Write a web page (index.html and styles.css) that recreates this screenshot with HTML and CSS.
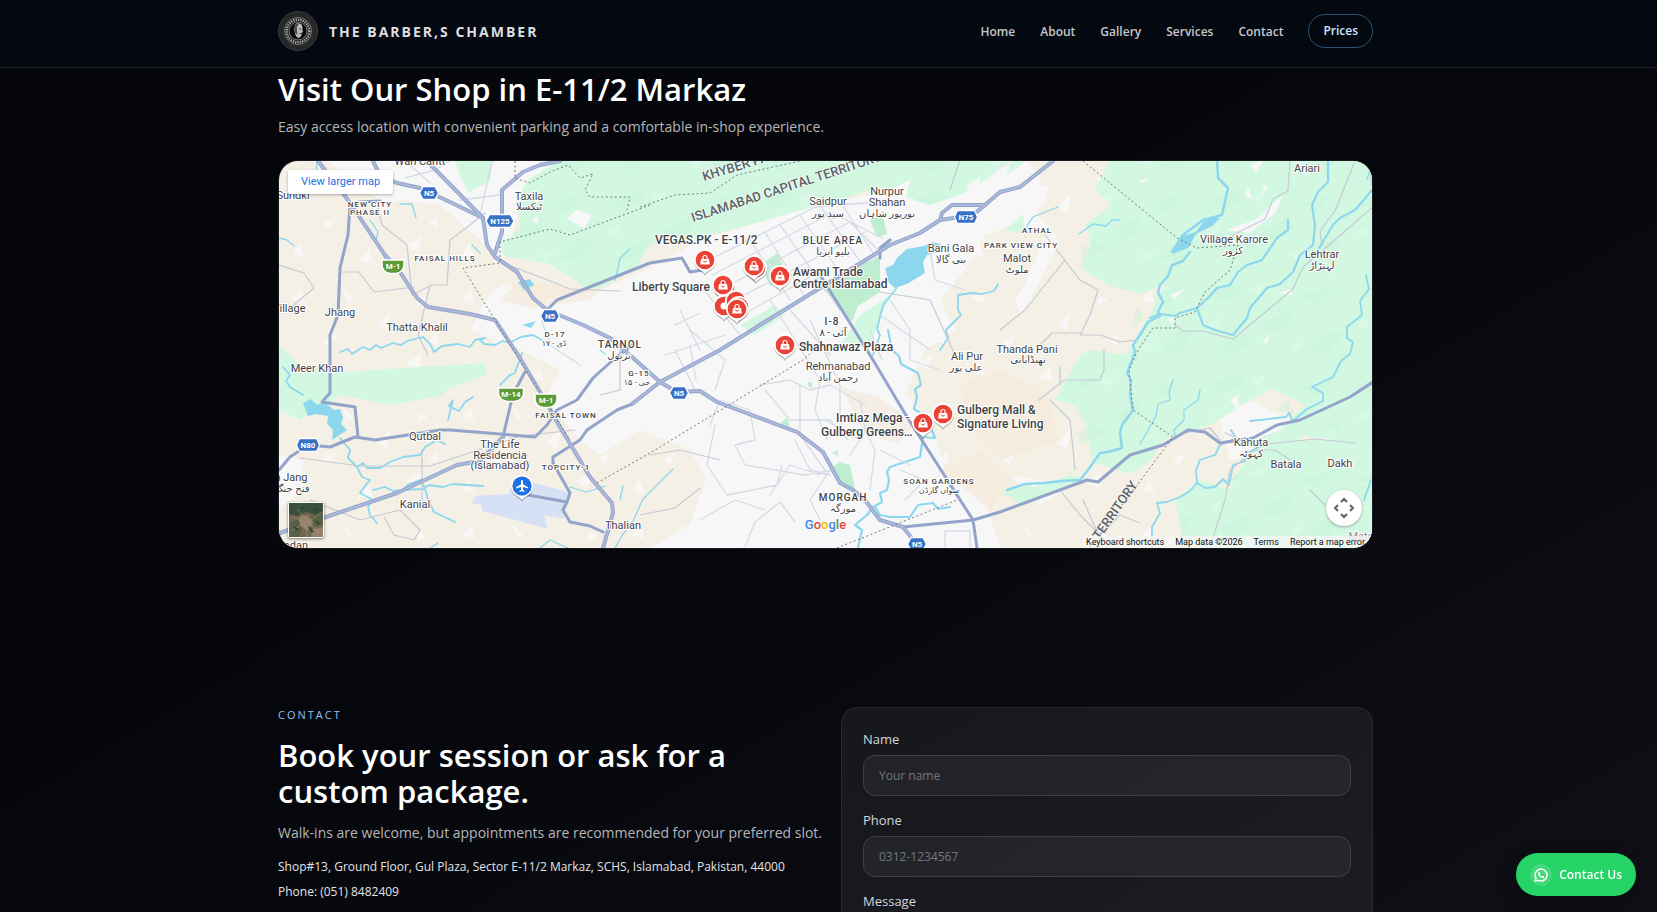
FILE: index.html
```html
<!DOCTYPE html>
<html lang="en">
<head>
<meta charset="utf-8">
<meta name="viewport" content="width=device-width, initial-scale=1">
<title>The Barber,s Chamber</title>
<link rel="stylesheet" href="styles.css">
</head>
<body>
<header class="site-header">
  <div class="container header-row">
    <a class="brand" href="#top">
      <svg class="brand-logo" viewBox="0 0 40 40" aria-hidden="true">
        <defs><radialGradient id="lg"><stop offset="0" stop-color="#191919"/><stop offset=".7" stop-color="#2b2a2a"/><stop offset="1" stop-color="#242427"/></radialGradient></defs>
        <circle cx="20" cy="20" r="19.500" fill="url(#lg)" stroke="#3b3d42"/>
        <circle cx="20" cy="20" r="13.500" fill="#111" stroke="#8a8a8a" stroke-width=".8"/>
        <circle cx="20" cy="20" r="11.300" fill="none" stroke="#a0a0a0" stroke-width="2.600" stroke-dasharray="1.500 .9"/>
        <circle cx="20" cy="20" r="9" fill="#0c0c0c" stroke="#aaa" stroke-width=".7"/>
        <path d="M17 13.500c2-2 6-1.500 7 1 .7 1.800.2 3 .4 4.500l.6 2-1.200.6c0 2.600-.8 4.800-3.300 5.400-2.500-1-3.500-3.500-3.700-6l-.8-3z" fill="#bdbdbd"/>
        <path d="M16 14c2-2 4-1.500 5-.5-2 1-2.500 3-2 5.500l.5 5c-2-1-3-3-3-5z" fill="#4a4a4a"/>
        <path d="M21 18h2M21.500 22.500h2" stroke="#222" stroke-width=".9"/>
      </svg>
      <span class="brand-name">THE BARBER,S CHAMBER</span>
    </a>
    <nav class="nav" aria-label="Main">
      <a href="#home">Home</a>
      <a href="#about">About</a>
      <a href="#gallery">Gallery</a>
      <a href="#services">Services</a>
      <a href="#contact">Contact</a>
      <a class="nav-pill" href="#prices">Prices</a>
    </nav>
  </div>
</header>

<main>
  <section class="container visit">
    <h2 class="title">Visit Our Shop in E-11/2 Markaz</h2>
    <p class="lead">Easy access location with convenient parking and a comfortable in-shop experience.</p>
    <div class="map">
      <svg class="map-canvas" viewBox="0 0 1093 387" preserveAspectRatio="xMidYMid slice" role="img" aria-label="Map of Islamabad">
        <defs>
          <g id="pin"><path d="M0 15c-2-3.500-5-4-7.800-7A11 11 0 1 1 7.800 8C5 11 2 11.500 0 15z" fill="#000" opacity=".25" transform="translate(0 1)"/><path d="M0 14c-2-3-5-3.500-7.800-6.200A11 11 0 1 1 7.800 7.800C5 10.500 2 11 0 14z" fill="#fff"/><circle r="9.300" fill="#ea4335"/></g>
          <g id="shop"><use href="#pin"/><path d="M-4-1h8l.8 5.500h-9.600z" fill="#fff"/><path d="M-2-1v-1.500a2 2 0 0 1 4 0V-1" fill="none" stroke="#fff" stroke-width="1.200"/><path d="M-1.800 1c.8 1.600 2.800 1.600 3.600 0" fill="none" stroke="#ea4335" stroke-width="1"/></g>
          <path id="nsh" d="M-6-6.500H6L9.500 0 6 6.500H-6L-9.500 0z"/>
          <path id="nshw" d="M-10.500-6.500h21L14 0l-3.500 6.500h-21L-14 0z"/>
          <path id="msh" d="M-11-7h22v5c0 5-4 8-8 8.500h-6c-4-.5-8-3.500-8-8.500z"/>
          <pattern id="hill" width="150" height="92" patternUnits="userSpaceOnUse">
            <path d="M5 20l30-14 12 6-20 12zM60 50l28-18 6 12-20 14zM100 20l34-10-18 20zM20 70l24-14 14 6-28 18zM110 74l20-20 14 4-16 20z" fill="#c6efd6" opacity=".4"/>
            <path d="M50 14l16-8-6 12zM90 70l16-4-10 10zM6 50l14-8-4 10z" fill="#e0faea" opacity=".7"/>
          </pattern>
          <pattern id="plain" width="170" height="118" patternUnits="userSpaceOnUse">
            <path d="M12 20l10-9 4 13zM62 8l12 12-5 3zM44 62l14-7-8 13zM98 46l14-14-4 20zM140 16l9 5-11 6zM126 84l17-9-4 16zM14 94l6-12 6 14zM80 100l10-12 5 14zM150 62l9-8-1 13z" fill="#f8f7f6"/>
          </pattern>
        </defs>
        <rect width="1093" height="387" fill="#f5f0e5"/>
        <rect width="1093" height="387" fill="url(#plain)"/>
        <g transform="translate(-279 -161)" stroke-linejoin="round" stroke-linecap="round">
          <g fill="#f7f7f8">
            <path d="M327 161H560L545 175 520 190 515 230 500 262 480 240 440 205 400 200 385 205 360 185z"/>
            <path d="M470 330L492 290 505 284 540 300 600 290 650 268 700 240 760 222 820 205 870 195 925 190 1025 161 1040 175 1038 215 1060 240 1015 225 985 235 965 270 940 300 955 330 925 350 905 395 930 420 945 470 985 500 1000 548 650 548 690 525 706 480 690 450 640 430 600 455 585 445 545 400 560 370 520 350z"/>
            <path d="M1005 190l45-5-8 22-40 8zM1015 300l10-15 20-50 14 6-24 50-15 25zM1220 420l30-20 40 20-20 30-40 10zM279 455l25 5-5 30-20 20zM1010 475l60 10-30 20z"/>
          </g>
          <g fill="#f5ead9"><path d="M840 386l40 12 35 26-18 20-32-10zM960 384l40-14 45 20 15 50-60 20-28-26zM500 300l20-20 60 10 30-10-20 20-60 8zM940 470l40-20 30 30-20 30z" opacity=".65"/></g>
          <g fill="#d3f8e2">
            <path d="M455 161h38l-3 20-22 12-8-18zM560 161H1010L985 180 960 195 930 205 900 195 870 190 840 200 800 210 760 222 700 238 650 244 636 268 600 288 585 289 575 280 550 264 503 256 500 242 520 232 518 195 530 178z"/>
            <path d="M1110 161L1095 190 1112 205 1085 225 1092 245 1080 268 1110 286 1140 294 1165 284 1150 315 1125 355 1090 350 1080 355 1055 400 1075 406 1088 430 1092 462 1130 474 1152 460 1163 440 1210 425 1250 400 1272 389 1305 405 1280 430 1240 445 1290 455 1300 436 1372 444V161z"/>
            <path d="M1260 445L1235 475 1230 490 1200 480 1175 500 1185 548H1372V440L1310 440z"/>
            <path d="M279 345L300 365 350 372 400 368 485 363 487 375 450 388 440 396 390 405 340 395 300 420 279 410z"/>
            <path d="M1010 495l60-20 20 5-70 25zM1000 495l30-12 10 18zM1005 230l18-16 2 20zM840 345l20-30 30-20-20 50zM740 325l35-20 10 10-30 20zM1012 161h14l-20 15z"/>
          </g>
          <path d="M560 161H1010L985 180 930 205 870 190 800 210 700 238 650 244 600 288 503 256 520 190zM1110 161L1095 190 1085 225 1080 268 1140 294 1125 355 1055 400 1092 462 1250 400 1372 444V161zM1235 475L1175 500 1185 548H1372V445z" fill="url(#hill)"/>
          <g fill="#f7f7f8"><path d="M1138 182l12-6-7 7zM1244 195l5-8 3 12zM1250 165l14-5-8 12zM1262 188l6-5-2 8zM1225 230l30-10 28-25-8 18-25 20zM1170 295l14-6-9 10zM1278 293l14-4v6zM1262 343l8-10-3 10zM567 218l10-8 15 5-8 14zM531 220l8-4-1 8zM880 195l30-15-5 24zM965 188l15-12-1 16zM1230 400l8-6 2 20zM1168 320l6-6v10z"/></g>
          <path d="M823 290L845 270 880 257 880 292 858 306 852 322 835 300zM760 265l18-12 10 25-18 8zM870 220l12-8 5 22-10 3zM832 467l8-5 10 3 5 25-14-6zM779 425l8-8 3 10zM832 453l6-3v6zM808 382l4 0 0 6-4-2z" fill="#bdeed0"/>
          <path d="M475 496l33-2 8-16 52 14-4 27-20-4 4 14-66-18v-6l-10-2z" fill="#d7e1f6"/>
          <!-- water -->
          <g fill="none" stroke="#8dd7ee" stroke-width="1.800">
            <path d="M1217 161L1218 178 1228 188 1222 215 1203 220 1183 235 1172 252M1190 252L1183 261 1172 265 1168 276 1160 285 1158 292 1163 302 1158 312 1160 316 1148 322 1140 335 1133 345 1135 352 1127 373 1131 380 1130 395 1133 410 1122 425 1120 433 1122 448 1108 452 1100 453 1088 470 1080 480 1062 481 1043 483 1025 484 1007 490" stroke-width="2.500"/>
            <path d="M1150 318L1160 314 1175 316 1180 313 1197 308 1203 325 1215 330 1233 335 1247 318 1250 308 1267 288 1280 284 1293 272 1300 255 1313 245 1315 225 1312 205 1318 192 1328 182V161M1372 190L1362 202 1355 210 1340 218 1333 225 1318 250M1197 308L1208 298 1217 288 1230 285 1238 272 1247 265 1262 260 1277 238 1288 230V220" stroke-width="2.200"/>
            <path d="M1366 275l3 14-9 12 2 14-15 12 0 11 6 4-3 12-9 7-8 16-21 10 11 6 0 8-16 8-14 12-4-8-3 4-36 4M1231 430l5 8-16 7-5 10-15 5-4 10 1 13-7 8-10 6-13 5-10 1 3 10-8 14V548M1197 483l8 5 10-1 8-8 6 6 4-20 12-4 2-8 16-8M1371 480l-7 20"/>
            <path d="M858 548l4-18-7-5 12-10 6-8 9-5-2-9 7-3 2-10-2-8 3-5 30-10 3-20 12 1-4-10-2-10-15-9 3-12-2-8 6-4-3-12-17-9-2-8-7-6-4-20M875 507l5 8 10 2 20 0 8-12 15-2 5 6 12-2" stroke-width="2.200"/>
            <path d="M873 355l7-20-3-6 6-24 13-16 3-10 5-5M940 350l8-12-2-8 15-15-3-5 0-15 14-2 10 1 12-3 4-7"/>
            <path d="M340 352l8-3 4 5 11-7 7 3 6-5 5 3 12-5 8 2 6-4 16-4 7 7 4 8 8-6 16-2 12 3 5-7 10-2-5 2 4 4 11 1 8-4 6 2 12-6 12-2 7 4 8 4M283 367l7 8-4 6 4 6 13 8M340 438l10 12-2 8 9 9 6-4 4 5 13 0 10-6 13-5 17-2 5-8 12-7 8 4M357 467l5 10 8 3-5 6-5 7 13 7-5 7 2 8 7 8M373 490l12-3 8 4 10-1 6-6 11-4 5 8 3 12 6 12 21 10M403 490l20-1 6-4 14 2 10-3 30 2M448 420l3-12 2-8-4 6 10 5 6-9 8-5M500 385l10-10 5-2 7-20"/>
            <path d="M317 161l-1 18M279 238l8 2 7 6M370 220l8 12-2 8 12 25M400 204l12 0 4 14M472 245l8 8M615 280l3-12 2-10 10-9M600 350l5 4M570 487l16 5 20-6M615 548l8-14 10-13 10-22 30-30M620 500l3-14M1120 220l-8 0-6 6-13-2-14 10M1173 380l-4 12 1 8-12 4-2 12-10 18-6 10M1200 390l-2 10-14 10 0 10-10 10 1 6M1372 165l-5 14M1058 207l-25 10-10 15M430 548l8-5M540 548l10-8 18 8" stroke-width="1.300"/>
          </g>
          <g fill="#8dd7ee"><path d="M885 268l4 15 6 5 12-4 18-11-2-11 4-7 10-3 4-8-9-2-8 4-17 3-10 9-4 7zM303 403l8-4 6 6 7-3 10 8 6-1 3 9-2 6 6 6-9 6-6 4 1-10-6-6 1-8-12-2-8 2zM1172 254l4-8 6-10 14-4 10-14 14 0-8 8-16 8-8 14zM518 282l12-3 4 6-10 5zM522 325l14-4-5 7z"/></g>
          <!-- local roads -->
          <g fill="none" stroke="#d5dbe6" stroke-width="1.300">
            <path d="M705 262l110-55 60-5M712 275l120-62 50 25M720 290l130-68 30 30M735 300l130-68M742 315l75-42M755 325l70-40M750 240l40 60M765 232l40 65M780 225l60 85M800 215l45 65M820 206l45 62M840 201l38 60M770 300l50 80-5 30 12 30M700 285l40 50M690 330l35 30-10 30M790 310l40 45M810 320l30 65 0 40"/>
            <path d="M665 355l60-20M675 350l20 40M690 345l6 35M760 385l30-5 20 10 20-5 35 20M765 390l25 30 40 0 18 20M710 425l10-25 30 10 5 30-20 5 10 20 60 10 30-5M715 425l-8 40 20 30 50-10 5-20M770 495l20-30 30 10M795 440l15 30 20 5M800 385l0 50 25 35M825 420l35 20-10 15M860 400l5 30 10 20-5 40M700 520l35-20 30 10M745 547l10-25 25-20 15 20M830 470l-20 30 10 20M880 450l30 15M900 470l25 10-20 20M945 531h25v16M945 531v16"/>
            <path d="M405 178l30-8 15-9M410 165l20 18M480 215l12-54M460 200l40-5M540 315l10 30 30 20M890 300l20 30 0 30 30 10M930 250l5 30 30 10M870 330l12 30M880 315l50 35M680 310l20 40M675 325l25-12"/>
          </g>
          <g fill="none" stroke="#c4c9d5" stroke-width="1.200">
            <path d="M377 205l5 20 25 20 5 50 20-10 15 0 3-45 20-15 15-12M341 272l18 0 15 20 40-5M279 265l25 8 10 15-30 25M430 285l-12 50 10 20M500 262l40 15 30 12 50 2M300 458l60 8 70 0 90-30 55-6M422 450l0 60M310 500l50 20 40-10 20 20-6 10-20-5-10-18M640 515l35-7 25-20M600 395l20-5 0-40M650 455l30-5 40 10"/>
            <path d="M880 292l50 8 25 55M960 160l-10 30M1045 235l35 45 18 10-8 25-10 20M1065 260l-40 50-25 20M1080 335l20 0 20 7 18-2M1040 345l12-12 30 0M1104 350v20l-4 10-36 0-25 20M1060 385l0-18M1371 165l0 20M1355 161l-20 50-15 20 2 15M1290 161l-2 30-15 8-8 20-30 15-10 10M1175 325l8 6 20 0 30 8 30-25 30-25 10-22 33-28 40-35M1050 400l20 20 5 50M1355 443l-40-4-60 6-30-12M1220 440l-10-12-25 5M1290 460l-15-10-20 0-25 20-5 30-15 47M1310 490l15 15M1083 500l20 45M1060 490l20 25 20 20 20-20 20 8"/>
          </g>
          <!-- main roads -->
          <g fill="none">
            <g stroke="#93a3ca" stroke-width="4">
              <path id="r1" d="M318 161L348 200 385 255 400 272 417 298 428 307 470 314 495 320 518 355 543 397 560 427 590 477 612 503 613 513 603 548"/>
              <path id="r2" d="M373 161L380 175 397 183 420 188 450 202 483 218 487 245 495 257 517 272 533 298 547 310 583 325 610 338 632 357 660 382 677 392 700 391 717 402 797 432 823 452 840 483 853 490 865 500 880 520 903 527 917 545"/>
              <path id="r3" d="M560 161L540 165 523 172 502 190 502 232 495 253M427 161L483 218"/>
              <path id="r4" d="M280 533L323 518 397 493 457 465 480 461 503 437M632 404L660 382 720 350 820 288 890 245 920 233 940 220 973 215 985 205 1000 192 1020 187 1053 161M940 220L942 213 952 205 985 205"/>
              <path id="r5" d="M820 275L870 355 907 417 973 520 977 548M903 527L973 520 1000 512 1087 480 1098 482 1130 455 1163 445 1188 430 1205 432 1220 443 1253 438 1277 425 1300 420 1350 397 1373 382" stroke-width="3"/>
              <path d="M547 310L557 300 650 263 682 258 690 272 703 270M279 470L290 457 308 445 330 447 355 437 375 440 440 430 450 430 500 434 535 437 547 425 557 410 577 400 593 378 613 360 632 345M525 372L513 394 503 437M528 495L567 502 570 493 553 463 553 457 580 440 587 430 617 410 632 404M567 502L563 510 570 522 590 526 603 532M350 205L348 235 340 268 338 315 330 335 330 393 322 402 355 407 358 437M350 205l10-3 20-1M880 258l0-10 10-8" stroke-width="3"/>
            </g>
            <g stroke="#aab8d9" stroke-width="2.200"><use href="#r1"/><use href="#r2"/><use href="#r3"/><use href="#r4"/></g>
          </g>
          <!-- borders -->
          <g fill="none" stroke="#76777b" stroke-width="1" stroke-dasharray="2 2.500" stroke-linecap="butt">
            <path d="M515 161V178L530 183 550 172 568 165 580 178 593 174 585 190 590 197 630 197 627 210M650 205L570 235 550 229 500 242V263L463 268 495 320 570 440M597 483L650 453 803 360 820 345M640 207L675 195 710 193 737 175 800 161M1083 161L1177 238 1197 248 1238 245 1230 270 1205 292 1195 312 1175 318 1175 328 1153 328 1138 350 1129 370 1133 410 1173 437 1090 548M837 548L957 500"/>
          </g>
          <!-- labels -->
          <g class="lb">
            <text x="420" y="165">Wah Cantt</text><text x="293" y="199">Sundki</text>
            <text x="529" y="200">Taxila</text><text class="ur" x="529" y="210">ٹیکسلا</text>
            <text x="289" y="312">Village</text><text x="340" y="316">Jhang</text><text x="417" y="331">Thatta Khalil</text>
            <text x="317" y="372">Meer Khan</text><text x="425" y="440">Qutbal</text>
            <text x="500" y="448">The Life</text><text x="500" y="459">Residencia</text><text x="500" y="469">(Islamabad)</text>
            <text x="291" y="481">h Jang</text><text class="ur" x="292" y="492">فتح جنگ</text><text x="415" y="508">Kanial</text><text x="623" y="529">Thalian</text><text x="292" y="549">Hadan</text>
            <text x="828" y="205">Saidpur</text><text class="ur" x="828" y="217">سید پور</text>
            <text x="887" y="195">Nurpur</text><text x="887" y="206">Shahan</text><text class="ur" x="887" y="217">نورپور شاہاں</text>
            <text x="951" y="252">Bani Gala</text><text class="ur" x="951" y="263">بنی گالا</text>
            <text x="1017" y="262">Malot</text><text class="ur" x="1017" y="273">ملوٹ</text>
            <text x="967" y="360">Ali Pur</text><text class="ur" x="966" y="371">علی پور</text>
            <text x="1027" y="353">Thanda Pani</text><text class="ur" x="1028" y="363">تھنڈاپانی</text>
            <text x="838" y="370">Rehmanabad</text><text class="ur" x="838" y="381">رحمن آباد</text>
            <text x="1307" y="172">Ariari</text><text x="1234" y="243">Village Karore</text><text class="ur" x="1233" y="254">کرور</text>
            <text x="1322" y="258">Lehtrar</text><text class="ur" x="1322" y="269">لہتڑاڑ</text>
            <text x="1251" y="446">Kahuta</text><text class="ur" x="1251" y="457">کہوٹہ</text><text x="1286" y="468">Batala</text><text x="1340" y="467">Dakh</text><text class="faint" x="1363" y="540">Mator</text>
          </g>
          <g class="lb dist">
            <text x="370" y="207">NEW CITY</text><text x="370" y="215">PHASE II</text><text x="445" y="261">FAISAL HILLS</text><text x="566" y="418">FAISAL TOWN</text>
            <text x="566" y="470">TOPCITY-1</text><text x="1037" y="233">ATHAL</text><text x="1021" y="248">PARK VIEW CITY</text><text x="939" y="484">SOAN GARDENS</text><text class="ur s" x="939" y="493">سواں گارڈن</text>
            <text x="555" y="337">D-17</text><text class="ur s" x="554" y="346">ڈی - ۱۷</text><text x="639" y="376">G-15</text><text class="ur s" x="637" y="385">جی - ۱۵</text>
          </g>
          <g class="lb town">
            <text x="620" y="348">TARNOL</text><text class="ur" x="619" y="359">ترنول</text><text x="833" y="244">BLUE AREA</text><text class="ur" x="833" y="255">بلیو ایریا</text>
            <text x="832" y="325">I-8</text><text class="ur" x="833" y="336">آئی - ۸</text><text x="843" y="501">MORGAH</text><text class="ur" x="843" y="512">مورگہ</text>
          </g>
          <g class="lb area">
            <text transform="translate(693 222) rotate(-18)">ISLAMABAD CAPITAL TERRITORY</text>
            <text transform="translate(704 181) rotate(-17)">KHYBER PAKHTUNKHWA</text>
            <text class="area-end" transform="translate(1138 485) rotate(-55)">TERRITORY</text>
          </g>
          <g class="lb poi">
            <text x="655" y="244">VEGAS.PK - E-11/2</text><text x="632" y="291">Liberty Square</text>
            <text x="793" y="276">Awami Trade</text><text x="793" y="288">Centre Islamabad</text><text x="799" y="351">Shahnawaz Plaza</text>
            <text x="836" y="422">Imtiaz Mega -</text><text x="821" y="436">Gulberg Greens…</text><text x="957" y="414">Gulberg Mall &amp;</text><text x="957" y="428">Signature Living</text>
          </g>
          <g fill="#3871c6" stroke="#fff" stroke-width="1.500">
            <use href="#nsh" x="429" y="193"/><use href="#nshw" x="500" y="221"/><use href="#nsh" x="550" y="316"/><use href="#nshw" transform="translate(966 217) scale(.82 1)"/><use href="#nshw" transform="translate(308 445) scale(.82 1)"/><use href="#nsh" x="679" y="393"/><use href="#nsh" x="917" y="544"/>
          </g>
          <g fill="#5c9a36" stroke="#fff" stroke-width="1.500"><use href="#msh" x="393" y="267"/><use href="#msh" transform="translate(511 395) scale(1.150 1)"/><use href="#msh" x="546" y="401"/></g>
          <g class="sh-t"><text x="429" y="196">N5</text><text x="500" y="224">N125</text><text x="550" y="319">N5</text><text x="966" y="220">N75</text><text x="308" y="448">N80</text><text x="679" y="396">N5</text><text x="917" y="547">N5</text><text x="393" y="269">M-1</text><text x="511" y="397">M-14</text><text x="546" y="403">M-1</text></g>
          <use href="#shop" x="705" y="260"/><use href="#shop" x="756" y="268"/><use href="#shop" x="754" y="266"/><use href="#shop" x="780" y="276"/><use href="#shop" x="725" y="287"/><use href="#shop" x="723" y="285"/>
          <use href="#pin" x="724" y="306"/><circle cx="724" cy="306" r="3.500" fill="#fff"/><use href="#pin" x="736" y="301"/><use href="#pin" x="739" y="307"/><use href="#shop" x="737" y="309"/>
          <use href="#shop" x="785" y="345"/><use href="#shop" x="943" y="414"/><use href="#shop" x="923" y="423"/>
          <use href="#pin" x="522" y="486"/><circle cx="522" cy="486" r="9.500" fill="#1a73e8"/>
          <path d="M522 480c.8 0 1 .8 1 1.500v2.800l5 3v1.300l-5-1.500v2.600l1.500 1.200v1l-2.500-.7-2.500.7v-1l1.500-1.200v-2.600l-5 1.500v-1.300l5-3v-2.800c0-.7.2-1.500 1-1.500z" fill="#fff"/>
        </g>
      </svg>
      <a class="map-link" href="#map">View larger map</a>
      <button class="map-thumb" type="button" aria-label="Show satellite imagery">
        <svg viewBox="0 0 34 34" aria-hidden="true"><rect width="34" height="34" fill="#71684f"/><path d="M0 0h34v8l-8 4-9-3-8 4-9-2z" fill="#39503f"/><path d="M0 20l8-4 6 6-4 12H0zM22 14l12-4v12l-8 2z" fill="#586143"/><path d="M10 14l8-2 6 7-5 9-8-5zM24 26l10-2v10H22z" fill="#94806b"/><path d="M4 14l12 6 14-8M16 20l2 14M8 6l10 12 12 12M2 28l14-8" stroke="#a5957d" stroke-width=".6" fill="none"/><path d="M12 4l4 2M24 6l5 1M5 24l4 3M27 18l3 3M20 24l4 5" stroke="#2f4335" stroke-width="2"/></svg>
      </button>
      <span class="map-logo" aria-label="Google"><span class="g-blue">G</span><span class="g-red">o</span><span class="g-yellow">o</span><span class="g-blue">g</span><span class="g-green">l</span><span class="g-red">e</span></span>
      <button class="map-cam" type="button" aria-label="Map camera controls">
        <svg viewBox="0 0 36 36" aria-hidden="true"><path d="M15 12l3-3 3 3M15 24l3 3 3-3M12 15l-3 3 3 3M24 15l3 3-3 3" fill="none" stroke="#5f6368" stroke-width="2"/></svg>
      </button>
      <div class="map-credits"><button type="button">Keyboard shortcuts</button><span>Map data ©2026</span><a href="#terms">Terms</a><a href="#report">Report a map error</a></div>
    </div>
  </section>

  <section class="container contact" id="contact">
    <div class="contact-copy">
      <p class="eyebrow">CONTACT</p>
      <h2 class="title">Book your session or ask for a custom package.</h2>
      <p class="lead">Walk-ins are welcome, but appointments are recommended for your preferred slot.</p>
      <address class="details">
        <p>Shop#13, Ground Floor, Gul Plaza, Sector E-11/2 Markaz, SCHS, Islamabad, Pakistan, 44000</p>
        <p>Phone: (051) 8482409</p>
      </address>
    </div>
    <form class="card">
      <div class="field"><label for="name">Name</label><input id="name" type="text" placeholder="Your name"></div>
      <div class="field"><label for="phone">Phone</label><input id="phone" type="tel" placeholder="0312-1234567"></div>
      <div class="field"><label for="message">Message</label><textarea id="message" rows="4"></textarea></div>
    </form>
  </section>
</main>

<a class="whatsapp" href="#whatsapp">
  <span class="wa-icon"><svg viewBox="0 0 24 24" aria-hidden="true"><path d="M3 21l1.650-3.800a9 9 0 1 1 3.400 2.900z" fill="none" stroke="#fff" stroke-width="2.200" stroke-linejoin="round"/><path d="M8.500 7.500c.6-.6 1.300-.5 1.600.2l.7 1.600c.2.500 0 .8-.8 1.600.7 1.500 1.700 2.500 3.200 3.200.8-.9 1.100-1 1.600-.8l1.600.8c.6.300.6.900.1 1.500-1.300 1.400-3 1.200-5.300-.2-2.600-1.700-4.800-4.900-2.700-7.900z" fill="#fff"/></svg></span>
  Contact Us
</a>
</body>
</html>
```
FILE: styles.css
```css
* { box-sizing: border-box; }
html { height: 100%; overflow: hidden; background: #06070c; }
body {
  margin: 0;
  padding-right: 6px;
  height: 100%;
  overflow: hidden;
  background: linear-gradient(150deg, #05060b 0%, #06070c 50%, #0f1016 100%);
  color: #f5f5f7;
  font-family: "Open Sans", "Noto Sans", sans-serif;
  font-size: 14px;
}
h2, p { margin: 0; }
a { color: inherit; text-decoration: none; }
.container { width: min(1095px, 100% - 40px); margin: 0 auto; }

.site-header {
  margin-right: -6px;
  padding: 11px 6px 16px 0;
  background: #040811;
  border-bottom: 1px solid #1f2127;
}
.header-row { display: flex; justify-content: space-between; align-items: center; }
.brand { display: flex; align-items: center; gap: 11px; }
.brand-logo { width: 40px; height: 40px; }
.brand-name { font-size: 14px; font-weight: 700; letter-spacing: 2px; color: #dddee0; }
.nav { display: flex; align-items: center; gap: 25px; font-size: 12px; font-weight: 600; color: #c6c7ca; }
.nav-pill {
  padding: 0 14px;
  line-height: 32px;
  border: 1px solid #2f5373;
  border-radius: 17px;
  color: #d3e8ff;
}

.title { font-size: 31px; font-weight: 600; line-height: 36px; color: #fff; }
.lead { font-size: 14px; line-height: 24px; color: #b5b6b9; }

.visit { padding-top: 3px; }
.visit .lead { margin-top: 8px; }
.map {
  position: relative;
  margin-top: 21px;
  height: 389px;
  overflow: hidden;
  border: 1px solid #1b1c22;
  border-radius: 20px;
  font-family: Roboto, sans-serif;
}
.map-canvas { display: block; width: 100%; height: 100%; }
.lb { fill: #3f4347; stroke: #fff; stroke-width: 2px; paint-order: stroke; font: 11px Roboto, "DejaVu Sans", sans-serif; text-anchor: middle; }
.lb .ur { font-size: 10px; letter-spacing: 0; font-weight: 400; }
.lb .faint { fill: #8a8d90; }
.dist { font-size: 8px; font-weight: 500; letter-spacing: 1px; }
.dist .s { font-size: 8px; }
.town { font-size: 10px; font-weight: 500; letter-spacing: 1px; }
.area { fill: #5b6067; font-size: 13px; font-weight: 500; text-anchor: start; stroke-width: 1px; }
.area-end { text-anchor: end; }
.poi { font-size: 12px; font-weight: 500; text-anchor: start; }
.sh-t { fill: #fff; stroke: none; font: 700 8px Roboto, sans-serif; text-anchor: middle; }

.map-link {
  position: absolute; left: 9px; top: 9px;
  padding: 0 13px;
  line-height: 24px;
  background: #fff;
  border-radius: 2px;
  box-shadow: 0 1px 3px rgba(0, 0, 0, .3);
  color: #1a73e8;
  font-size: 11px;
}
.map-thumb {
  position: absolute; left: 9px; bottom: 10px;
  width: 36px; height: 36px; padding: 0;
  border: 1px solid #fff; border-radius: 2px;
  box-shadow: 0 1px 3px rgba(0, 0, 0, .5);
  background: #71684f;
}
.map-thumb svg { display: block; width: 100%; height: 100%; }
.map-logo {
  position: absolute; left: 50%; bottom: 14px;
  transform: translateX(-50%);
  font: 500 13px/18px Roboto, sans-serif;
  text-shadow: 0 0 2px #fff;
}
.g-blue { color: #4285f4; } .g-red { color: #ea4335; } .g-yellow { color: #fbbc04; } .g-green { color: #34a853; }
.map-cam {
  position: absolute; right: 10px; bottom: 22px;
  width: 36px; height: 36px; padding: 0;
  border: 0; border-radius: 50%;
  background: #fff;
  box-shadow: 0 1px 3px rgba(0, 0, 0, .3);
}
.map-cam svg { display: block; width: 100%; height: 100%; }
.map-credits {
  position: absolute; right: 0; bottom: 0;
  display: flex; gap: 11px;
  padding: 0 7px 0 3px;
  background: rgba(245, 245, 245, .75);
  color: #111;
  font-size: 9px; line-height: 12px;
}
.map-credits button { padding: 0; border: 0; background: none; font: inherit; color: inherit; }

.contact {
  display: grid;
  grid-template-columns: 549fr 532fr;
  gap: 14px;
  align-items: start;
  padding-top: 158px;
}
.eyebrow { font-size: 11px; line-height: 15px; letter-spacing: 2px; color: #8fc1f5; }
.contact .title { margin-top: 15px; }
.contact .lead { margin-top: 12px; }
.details { margin-top: 9px; font-style: normal; font-size: 12px; line-height: 25px; color: #e2e3e5; }
.card {
  display: grid;
  gap: 14px;
  padding: 21px;
  background: rgba(255, 255, 255, .06);
  border: 1px solid #2a2b31;
  border-radius: 16px;
}
.field { display: grid; gap: 6px; }
.field label { font-size: 13px; line-height: 20px; color: #d5d6d9; }
.field input, .field textarea {
  width: 100%;
  min-height: 41px;
  padding: 8px 15px;
  border: 1px solid #3e3f45;
  border-radius: 12px;
  background: rgba(255, 255, 255, .05);
  color: #fff;
  font: 12px/20px "Open Sans", "Noto Sans", sans-serif;
}
.field ::placeholder { color: #75767b; opacity: 1; }

.whatsapp {
  position: fixed; right: 21px; bottom: 16px;
  display: flex; align-items: center; gap: 7px;
  padding: 0 14px;
  height: 43px;
  border-radius: 22px;
  background: #25d366;
  color: #fff;
  font-size: 12px; font-weight: 600;
  box-shadow: 0 8px 20px rgba(0, 0, 0, .3);
}
.wa-icon { display: grid; place-items: center; width: 22px; height: 22px; border-radius: 50%; background: rgba(255, 255, 255, .15); }
.wa-icon svg { width: 16px; height: 16px; }
```
